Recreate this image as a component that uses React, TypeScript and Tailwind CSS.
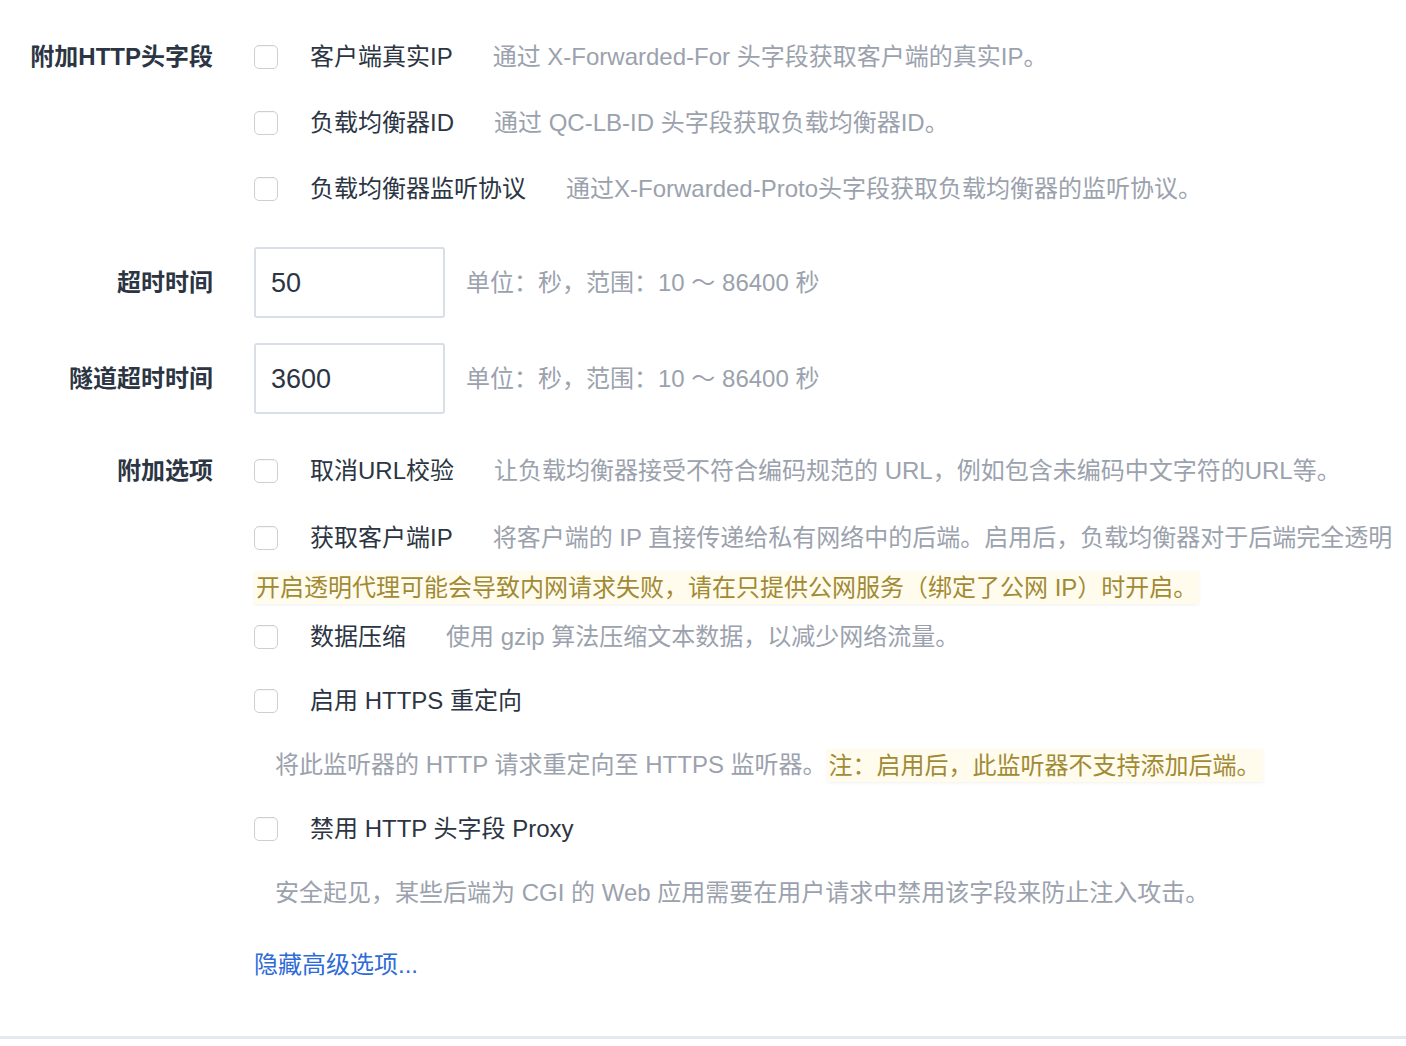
import React from 'react';

const font = { fontFamily: '"Liberation Sans", "Noto Sans CJK SC", sans-serif' };

const Checkbox = () => (
  <span className="inline-block w-6 h-6 shrink-0 rounded-[5px] border border-[#cbd0d7] bg-white shadow-[inset_0_1px_1px_rgba(0,0,0,0.04)]" />
);

const CheckItem = ({ label, desc, gap = 'ml-10', className = '' }: { label: string; desc?: string; gap?: string; className?: string }) => (
  <div className={`flex items-center h-10 whitespace-nowrap ${className}`}>
    <Checkbox />
    <span className="ml-8 text-[#2c3543]">{label}</span>
    {desc && <span className={`${gap} text-[#9ba2ad]`}>{desc}</span>}
  </div>
);

const Warn = ({ children }: { children: React.ReactNode }) => (
  <span className="inline-block leading-[33px] px-0.5 bg-[#fffcee] text-[#a28a35] shadow-[0_1px_3px_rgba(0,0,0,0.06)]">
    {children}
  </span>
);

const Label = ({ children, className = '' }: { children: React.ReactNode; className?: string }) => (
  <div className={`w-[213px] shrink-0 text-right font-bold text-[#2c3543] ${className}`}>{children}</div>
);

const App = () => {
  return (
    <div className="min-h-screen bg-white text-[24px] leading-10 overflow-hidden" style={font}>
      <div className="pt-[37px] pb-[51px]">
        {/* 附加HTTP头字段 */}
        <div className="flex">
          <Label>附加HTTP头字段</Label>
          <div className="ml-[41px] flex flex-col gap-[26px]">
            <CheckItem label="客户端真实IP" desc="通过 X-Forwarded-For 头字段获取客户端的真实IP。" />
            <CheckItem label="负载均衡器ID" desc="通过 QC-LB-ID 头字段获取负载均衡器ID。" />
            <CheckItem label="负载均衡器监听协议" desc="通过X-Forwarded-Proto头字段获取负载均衡器的监听协议。" />
          </div>
        </div>

        {/* 超时时间 */}
        <div className="flex items-center mt-[38px]">
          <Label>超时时间</Label>
          <div className="ml-[41px] w-[191px] h-[71px] rounded-[3px] border-2 border-[#d9dee7] flex items-center px-[15px] text-[#2c3543] text-[27px]">50</div>
          <span className="ml-[21px] text-[#9ba2ad]">单位：秒，范围：10 ～ 86400 秒</span>
        </div>

        {/* 隧道超时时间 */}
        <div className="flex items-center mt-[25px]">
          <Label>隧道超时时间</Label>
          <div className="ml-[41px] w-[191px] h-[71px] rounded-[3px] border-2 border-[#d9dee7] flex items-center px-[15px] text-[#2c3543] text-[27px]">3600</div>
          <span className="ml-[21px] text-[#9ba2ad]">单位：秒，范围：10 ～ 86400 秒</span>
        </div>

        {/* 附加选项 */}
        <div className="flex mt-[37px]">
          <Label>附加选项</Label>
          <div className="ml-[41px] flex flex-col">
            <CheckItem label="取消URL校验" desc="让负载均衡器接受不符合编码规范的 URL，例如包含未编码中文字符的URL等。" />
            <CheckItem className="mt-[27px]" label="获取客户端IP" desc="将客户端的 IP 直接传递给私有网络中的后端。启用后，负载均衡器对于后端完全透明" />
            <div className="mt-[13px] h-[33px] flex whitespace-nowrap">
              <Warn>开启透明代理可能会导致内网请求失败，请在只提供公网服务（绑定了公网 IP）时开启。</Warn>
            </div>
            <CheckItem className="mt-[13px]" label="数据压缩" desc="使用 gzip 算法压缩文本数据，以减少网络流量。" />
            <CheckItem className="mt-[24px]" label="启用 HTTPS 重定向" />
            <div className="mt-[24px] ml-[21px] flex items-center h-10 whitespace-nowrap">
              <span className="text-[#9ba2ad]">将此监听器的 HTTP 请求重定向至 HTTPS 监听器。</span>
              <Warn>注：启用后，此监听器不支持添加后端。</Warn>
            </div>
            <CheckItem className="mt-[24px]" label="禁用 HTTP 头字段 Proxy" />
            <div className="mt-[24px] ml-[21px] h-10 whitespace-nowrap text-[#9ba2ad]">
              安全起见，某些后端为 CGI 的 Web 应用需要在用户请求中禁用该字段来防止注入攻击。
            </div>
            <a href="#" className="mt-[32px] h-10 text-[#2e6bd6]">隐藏高级选项...</a>
          </div>
        </div>
      </div>
      <div className="h-[3px] bg-[#e5e8ee]" />
    </div>
  );
};

export default App;
